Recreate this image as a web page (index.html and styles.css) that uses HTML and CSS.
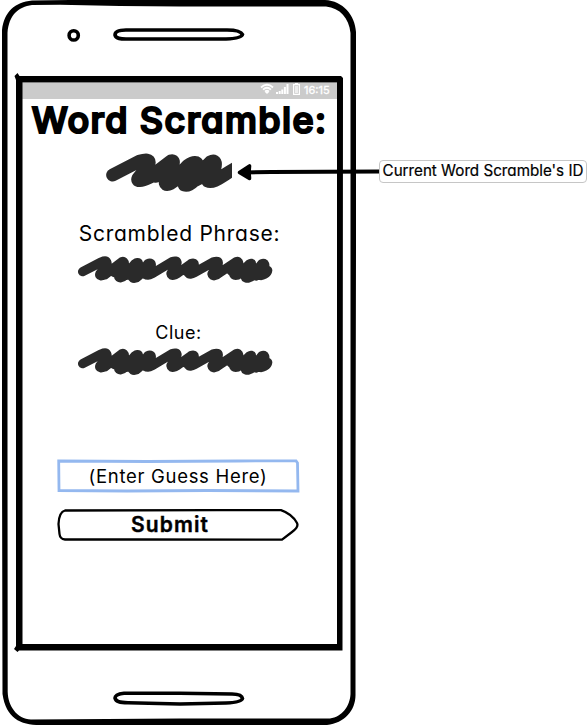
FILE: index.html
```
<!DOCTYPE html>
<html lang="en">
<head>
<meta charset="utf-8">
<title>Word Scramble</title>
<link rel="stylesheet" href="styles.css">
</head>
<body>
<svg class="defs" width="0" height="0" aria-hidden="true">
  <symbol id="scribble" viewBox="0 0 585 84">
    <path d="M14 47L70 18C88 10 92 22 80 36L66 53C62 62 72 60 80 57L132 17C142 14 140 28 134 37L122 60C121 68 133 66 138 60L170 24C184 14 184 26 177 37L164 62C162 70 176 67 182 60L210 23C222 17 222 30 215 38L204 52C205 60 213 58 222 53L282 17C301 11 300 23 290 34L279 53C280 62 291 57 299 52L339 23C352 18 350 27 343 36L331 50C332 57 342 54 349 50L408 17C426 12 422 26 414 34L402 54C403 62 414 60 421 53L475 17C484 14 484 25 478 33L467 52C466 61 478 59 484 54L514 24C524 17 521 29 515 38L501 62C503 70 517 66 523 60L552 23C561 19 562 29 558 36L546 58C553 60 568 53 569 43M76 55L100 38M110 50L135 38L222 40M145 58L168 30M200 55L205 35M495 55L560 42M535 60L530 35M460 45L505 35M325 46L350 34"/>
  </symbol>
</svg>
<main class="board">
  <section class="phone">
    <svg class="shell" viewBox="0 0 358 725" width="358" height="725" aria-hidden="true">
      <path class="fill" d="M32 .5L70 0H325C343 1 355 15 356 32V250L355.5 500V694C356 710 345 723 327 725H40C20 725 6 718 2.500 694L2 450V30C4 12 15 2 32 .5ZM32 5C18 7 9 15 7.500 33V450L7.700 692C8 706 17 719 31 719.500L70 719.300L180 718.500H330C342 717 350 706 350.500 694L350.500 500V33C349 18 340 8 326 6.500H180L120 6L60 4.800Z"/>
      <ellipse class="line" cx="73.700" cy="35.400" rx="4.600" ry="4.600"/>
      <path class="line" d="M180 30H126C118 30 115 32 115 35C116 39 121 39 126 39H226C238 38.500 242 37 242.500 34.500C241 31 235 30 227 30Z"/>
      <path class="line" d="M180 693.200H124C117 694 115 696 115 698C116 702 120 702.500 128 702.800L180 704L226 703C238 702.500 242 701 242.500 698.500C242 695 238 694 232 694Z"/>
      <path class="fill" d="M14.500 76L17.500 73L19.500 76H341L343 78L342.500 650.500H19L17.500 652L14 649L16 646V80ZM22.500 82.500V644H337V82.500Z"/>
    </svg>
    <div class="screen">
      <div class="status">
        <svg class="wifi" viewBox="0 0 14 12" width="14" height="12"><path d="M1 4.500Q7-1 13 4.500M3 6.600Q7 3 11 6.600M5 8.600Q7 7 9 8.600"/><path class="solid" d="M5 9L7 11L9 9Z"/></svg>
        <svg class="bars" viewBox="0 0 13 12" width="13" height="12"><path d="M0 9h2v2H0zM2.700 8h2v3h-2zM5.300 6.500h2V11h-2zM7.900 4h2v7h-2zM10.500 1h2v10h-2z"/></svg>
        <svg class="battery" viewBox="0 0 7 12" width="7" height="12"><path d="M2 0h3v1h2v11h-7v-11H2zM1.200 2.200v8.600h4.600V2.200z" fill-rule="evenodd"/><path class="charge" d="M2 3h3v7h-3z"/></svg>
        <span class="clock">16:15</span>
      </div>
      <h1 class="title">Word Scramble:</h1>
      <svg class="code" viewBox="0 0 378 120" width="126" height="40"><path d="M20 66L100 25C143 12 134 34 105 65L96 76C92 85 102 86 132 72L195 24C212 18 195 51 184 68L178 91C180 101 206 88 213 72L246 37C281 13 286 45 255 82L235 96C253 103 277 70 286 54L313 27C335 15 330 44 318 67L305 84C323 93 350 66 393 43M150 70L190 54L206 83L257 56L258 87L306 62L335 75M225 70L300 50"/></svg>
      <h2 class="phrase">Scrambled Phrase:</h2>
      <svg class="scribble" width="195" height="28"><use href="#scribble"/></svg>
      <h3 class="clue">Clue:</h3>
      <svg class="scribble" width="195" height="28"><use href="#scribble"/></svg>
      <div class="guess">
        <svg class="outline" viewBox="0 0 243 34" width="243" height="34"><path d="M1.700 2L90 2.500L180 2L239 1.800L240.500 4L241 32L150 31.500L70 32L2 31.500Z"/></svg>
        <span class="guess-text">(Enter Guess Here)</span>
      </div>
      <div class="submit">
        <svg class="outline" viewBox="0 0 243 33" width="243" height="33"><path d="M8 1.500L160 1.200H224Q235 5 240 14Q242 18 235 23L225 30.700L80 30.500H8Q3 30 2.500 25L1.500 15Q2 3 8 1.500Z"/></svg>
        <span class="submit-text">Submit</span>
      </div>
    </div>
  </section>
  <aside class="note">
    <svg class="arrow" viewBox="0 0 144 18" width="144" height="18"><path class="shaft" d="M8 9.500L35 9L144 8.500"/><path class="head" d="M3.500 9.500L13.500 3L13 9L13.500 15.500Z"/></svg>
    <span class="note-text">Current Word Scramble's ID</span>
  </aside>
</main>
</body>
</html>
```
FILE: styles.css
```
* { box-sizing: border-box; }
body {
  margin: 0;
  background: #fff;
  color: #000;
  font-family: Inter, "Liberation Sans", sans-serif;
  font-feature-settings: "cv11" 1, "ss03" 1;
  overflow: hidden;
}
svg { display: block; flex: none; overflow: visible; }
.defs { position: absolute; }
.board { position: relative; width: 587px; height: 725px; }
.phone { position: relative; width: 358px; height: 725px; padding: 83px 21px 0 22px; }
.shell { position: absolute; left: 0; top: 0; }
.shell .fill { fill: #000; fill-rule: evenodd; }
.shell .line { fill: none; stroke: #000; stroke-width: 3.6; }
.screen {
  display: flex;
  flex-direction: column;
  align-items: center;
  width: 315px;
  height: 562px;
}
.status {
  display: flex;
  justify-content: flex-end;
  align-items: flex-start;
  align-self: stretch;
  height: 16px;
  padding-right: 5px;
  background: #cbcbcb;
  color: #fff;
}
.wifi { fill: none; stroke: #fff; stroke-width: 1.8; margin-right: 2px; }
.wifi .solid { fill: #fff; stroke: none; }
.bars { fill: #fff; margin-right: 4px; }
.battery { fill: #fff; margin-right: 4px; }
.battery .charge { fill: #eee; }
.clock { width: 28px; font: 400 11px/14px Inter, "Liberation Sans", sans-serif; -webkit-text-stroke: .3px #fff; white-space: nowrap; }
h1, h2, h3 { margin: 0; white-space: nowrap; }
.title {
  height: 54px;
  font-size: 36px;
  line-height: 43px;
  font-weight: 500;
  letter-spacing: 1.4px;
  -webkit-text-stroke: 2.2px #000;
  stroke-linejoin: round;
}
.code { align-self: flex-start; margin-left: 84px; overflow: hidden; }
.code path { fill: none; stroke: #2a2a2a; stroke-width: 39; stroke-linecap: round; stroke-linejoin: round; }
.phrase { margin-top: 27px; height: 36px; font-size: 21px; line-height: 28px; font-weight: 400; letter-spacing: .75px; }
.scribble { align-self: flex-start; margin-left: 56px; fill: none; stroke: #2a2a2a; stroke-width: 28; stroke-linecap: round; stroke-linejoin: round; }
.clue { margin-top: 37px; height: 27px; font-size: 18px; line-height: 24px; font-weight: 400; letter-spacing: .5px; transform: translateX(-1px); }
.guess, .submit { position: relative; display: flex; align-items: center; justify-content: center; width: 243px; margin-right: 3px; }
.guess { height: 34px; margin-top: 83px; }
.outline { position: absolute; left: 0; top: 0; fill: none; }
.guess .outline { stroke: #94b8ef; stroke-width: 2.8; }
.guess-text { font-size: 18.5px; letter-spacing: .7px; }
.submit { height: 33px; margin-top: 16px; padding: 0 16px 3px 0; }
.submit .outline { stroke: #000; stroke-width: 2.3; stroke-linejoin: round; }
.submit-text { font-size: 21px; font-weight: 600; letter-spacing: 1.1px; -webkit-text-stroke: .4px #000; }
.note { position: absolute; left: 236px; top: 160px; display: flex; align-items: center; }
.arrow .shaft { fill: none; stroke: #000; stroke-width: 4; }
.arrow .head { stroke: #000; stroke-width: 3.6; stroke-linejoin: round; }
.note-text {
  display: flex;
  align-items: center;
  justify-content: center;
  width: 208px;
  height: 23px;
  margin-left: -1px;
  padding-bottom: 2px;
  border: 1px solid #c6c6c6;
  border-radius: 4px;
  background: #fff;
  font-size: 15.2px;
  -webkit-text-stroke: .2px #000;
  white-space: nowrap;
}
```
